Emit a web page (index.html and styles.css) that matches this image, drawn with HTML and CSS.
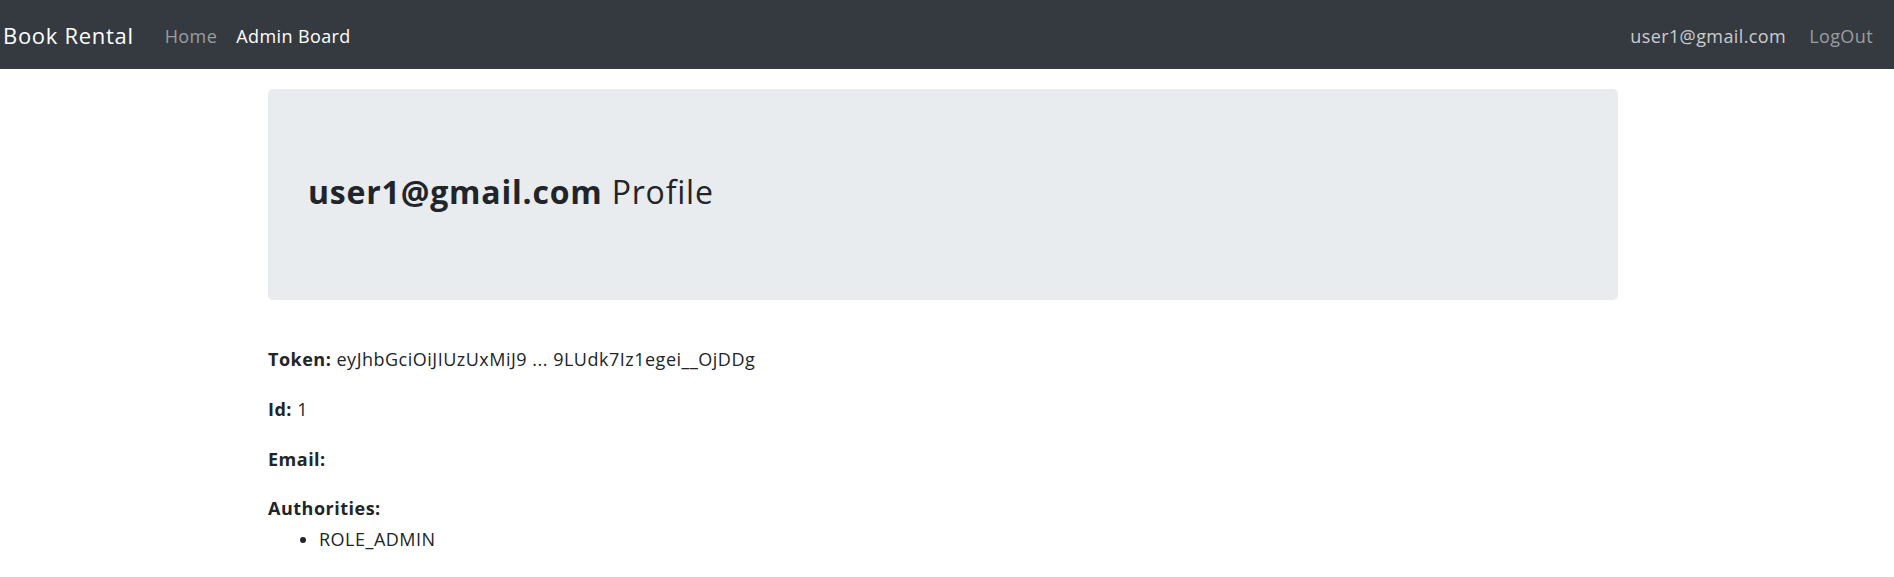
FILE: index.html
```html
<!DOCTYPE html>
<html lang="en">
<head>
<meta charset="utf-8">
<title>Book Rental</title>
<link rel="stylesheet" href="styles.css">
</head>
<body>
<nav class="navbar">
  <a class="brand" href="#">Book Rental</a>
  <div class="nav-left">
    <a class="nav-link muted" href="#">Home</a>
    <a class="nav-link active" href="#">Admin Board</a>
  </div>
  <div class="nav-right">
    <a class="nav-link user" href="#">user1@gmail.com</a>
    <a class="nav-link muted" href="#">LogOut</a>
  </div>
</nav>
<main class="container">
  <header class="jumbotron">
    <h3 class="title"><strong>user1@gmail.com</strong> Profile</h3>
  </header>
  <p class="field"><strong>Token:</strong> eyJhbGciOiJIUzUxMiJ9 ... 9LUdk7Iz1egei__OjDDg</p>
  <p class="field"><strong>Id:</strong> 1</p>
  <p class="field"><strong>Email:</strong> </p>
  <strong class="label">Authorities:</strong>
  <ul class="roles">
    <li>ROLE_ADMIN</li>
  </ul>
</main>
</body>
</html>
```
FILE: styles.css
```css
* { box-sizing: border-box; }
html, body { margin: 0; padding: 0; }
body {
  font-family: "Open Sans", "Noto Sans", sans-serif;
  font-size: 18px;
  letter-spacing: 0.5px;
  color: #212529;
  background: #fff;
}
a { text-decoration: none; }
.navbar {
  display: flex;
  align-items: center;
  height: 69px;
  background: #343a40;
  padding: 0 21px 0 3px;
}
.brand {
  color: #fff;
  font-size: 22px;
  letter-spacing: 0.7px;
  line-height: 30px;
}
.nav-left {
  display: flex;
  gap: 19px;
  margin-left: 31px;
}
.nav-right {
  display: flex;
  gap: 23px;
  margin-left: auto;
}
.nav-link {
  font-size: 18px;
  letter-spacing: 0.4px;
  line-height: 26px;
  padding-top: 2px;
}
.muted { color: rgba(255,255,255,0.5); }
.active { color: #fff; }
.user { color: rgba(255,255,255,0.75); }
.container {
  width: 1358px;
  margin: 0 auto;
  padding-right: 8px;
}
.jumbotron {
  margin-top: 20px;
  height: 211px;
  background: #e9ecef;
  border-radius: 5px;
  padding: 0 40px;
  display: flex;
  align-items: center;
}
.title {
  margin: 0 0 6px 0;
  font-size: 32px;
  font-weight: 400;
  letter-spacing: 0.8px;
  line-height: 38px;
}
.title strong { font-weight: 700; }
.field {
  margin: 0;
  line-height: 26px;
}
.field:first-of-type { margin-top: 46px; }
.field + .field { margin-top: 24px; }
.label {
  display: block;
  margin-top: 23px;
  line-height: 26px;
}
.roles {
  margin: 5px 0 0 0;
  padding-left: 51px;
  line-height: 26px;
}
```
